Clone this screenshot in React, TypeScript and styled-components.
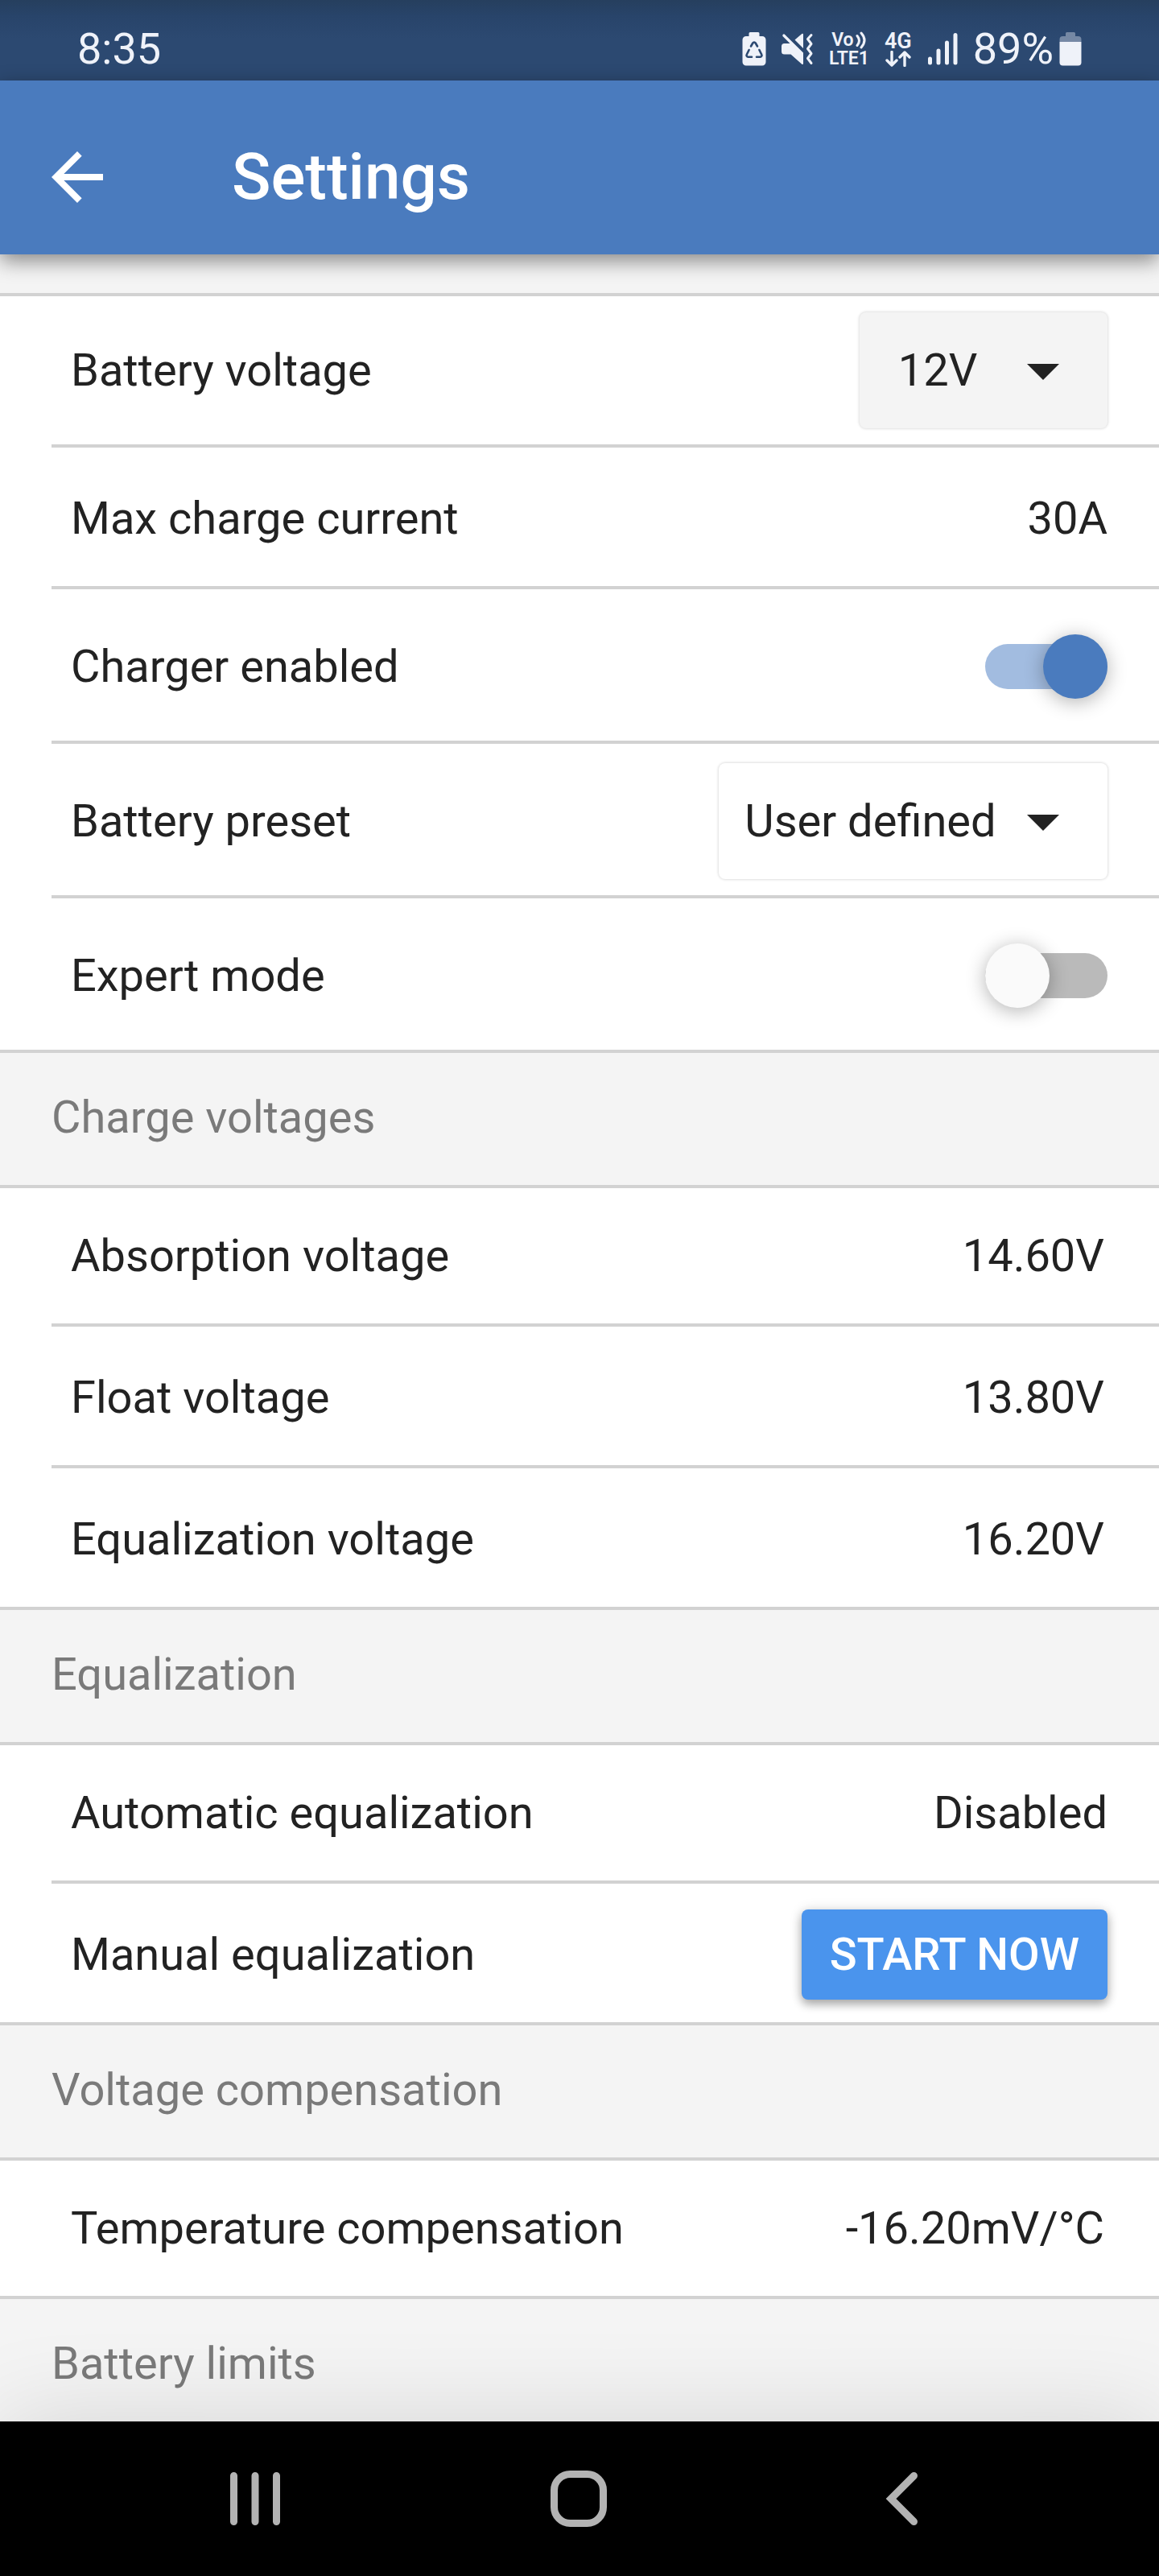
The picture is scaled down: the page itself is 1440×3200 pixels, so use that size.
import React, { useState } from "react";
import styled, { createGlobalStyle, css } from "styled-components";

const color = {
  brand: "#4a7bbe",
  brandLight: "#a2bce0",
  statusTop: "#263f5e",
  status: "#2c4971",
  statusInk: "#eff2f9",
  action: "#4a94ed",
  ink: "#222222",
  muted: "#7a7a7a",
  line: "#d2d2d2",
  surface: "#ffffff",
  canvas: "#f4f4f4",
  navInk: "#b3b3b3",
};

const GlobalStyle = createGlobalStyle`
  *, *::before, *::after { box-sizing: border-box; }
  body { margin: 0; background: ${color.canvas}; }
  button, select, input { font: inherit; margin: 0; }
`;

const Page = styled.div`
  display: flex;
  flex-direction: column;
  height: 100vh;
  overflow: hidden;
  background: ${color.canvas};
  color: ${color.ink};
  font-family: Roboto, "Noto Sans", sans-serif;
  font-size: 56px;
  line-height: 64px;
`;

const StatusBar = styled.div`
  flex: none;
  display: flex;
  align-items: center;
  justify-content: space-between;
  height: 100px;
  padding: 22px 96px 0;
  background: linear-gradient(${color.statusTop}, #28446a 20px, ${color.status} 48px);
  color: ${color.statusInk};
  font-size: 54px;
`;

const StatusIcons = styled.div`
  display: flex;
  align-items: center;
  gap: 19px;

  svg {
    display: block;
    height: 44px;
  }
`;

const BatteryLevel = styled.div`
  display: flex;
  align-items: center;
  gap: 7px;
`;

const NetworkBadge = styled.span`
  display: flex;
  flex-direction: column;
  align-items: center;
  font-size: 23px;
  font-weight: 600;
  line-height: 23px;
`;

const VoiceLine = styled.span`
  display: flex;
  align-items: center;
  gap: 2px;

  svg {
    height: 22px;
  }
`;

const DataBadge = styled(NetworkBadge)`
  font-size: 27px;

  svg {
    height: 20px;
  }
`;

const AppBar = styled.header`
  position: relative;
  z-index: 1;
  flex: none;
  display: flex;
  align-items: center;
  gap: 144px;
  height: 216px;
  padding: 24px 48px 0;
  background: ${color.brand};
  box-shadow: 0 8px 24px rgba(0, 0, 0, 0.45);
  color: #ffffff;
`;

const IconButton = styled.button`
  display: grid;
  place-items: center;
  padding: 0;
  border: 0;
  background: none;
  color: inherit;
  cursor: pointer;
`;

const Title = styled.h1`
  margin: 0;
  font-size: 80px;
  font-weight: 500;
  line-height: 96px;
`;

const Content = styled.main`
  flex: 1;
  min-height: 0;
  padding-top: 48px;
  overflow-y: auto;
  scrollbar-width: none;
`;

const GroupTitle = styled.h2`
  display: flex;
  align-items: center;
  min-height: 164px;
  margin: 0;
  padding: 0 64px 4px;
  color: ${color.muted};
  font-size: 56px;
  font-weight: 400;
`;

const Group = styled.div`
  border-block: 4px solid ${color.line};
  background: ${color.surface};
`;

const Row = styled.div<{ $tall?: boolean }>`
  box-sizing: content-box;
  display: flex;
  align-items: center;
  justify-content: space-between;
  min-height: ${(p) => (p.$tall ? 184 : 168)}px;
  margin-left: 64px;
  padding: 0 64px 0 24px;

  & + & {
    padding-top: 4px;
    border-top: 4px solid ${color.line};
  }
`;

const Value = styled.span<{ $measured?: boolean }>`
  padding-right: ${(p) => (p.$measured ? 4 : 0)}px;
  text-align: right;
`;

const SelectBox = styled.div<{ $filled?: boolean }>`
  position: relative;
  border-radius: 8px;
  background: ${(p) => (p.$filled ? color.canvas : color.surface)};
  box-shadow: 0 0 3px 1px rgba(0, 0, 0, 0.13);

  svg {
    position: absolute;
    top: 50%;
    right: 60px;
    margin-top: -8px;
    pointer-events: none;
  }
`;

const Select = styled.select<{ $filled?: boolean }>`
  display: block;
  min-width: 308px;
  height: 144px;
  padding: 0 ${(p) => (p.$filled ? 146 : 138)}px 0 32px;
  border: 0;
  appearance: none;
  background: none;
  color: inherit;
  text-align: center;
  text-align-last: center;
`;

const Switch = styled.input`
  position: relative;
  flex: none;
  width: 152px;
  height: 56px;
  border-radius: 28px;
  appearance: none;
  background: #bababa;
  cursor: pointer;

  &::before {
    content: "";
    position: absolute;
    top: -12px;
    left: 0;
    width: 80px;
    height: 80px;
    border-radius: 50%;
    background: #fafafa;
    box-shadow: 0 4px 24px rgba(0, 0, 0, 0.3);
  }

  ${(p) =>
    p.checked &&
    css`
      background: ${color.brandLight};

      &::before {
        right: 0;
        left: auto;
        background: ${color.brand};
      }
    `}
`;

const ActionButton = styled.button`
  height: 112px;
  padding: 0 35px;
  border: 0;
  border-radius: 8px;
  background: ${color.action};
  box-shadow: 0 6px 12px rgba(0, 0, 0, 0.3), 0 0 16px rgba(0, 0, 0, 0.12);
  color: #ffffff;
  font-weight: 500;
  text-transform: uppercase;
  cursor: pointer;
`;

const NavBar = styled.nav`
  position: relative;
  z-index: 1;
  flex: none;
  display: grid;
  grid-template-columns: repeat(3, 1fr);
  height: 192px;
  padding: 0 118px 0 116px;
  background: #000000;
  box-shadow: 0 0 120px rgba(0, 0, 0, 0.13);
  color: ${color.navInk};
`;

const Caret = () => (
  <svg width="40" height="20" viewBox="0 0 40 20" aria-hidden="true">
    <path d="M0 0H40L20 20Z" fill="currentColor" />
  </svg>
);

const BatterySaverIcon = () => (
  <svg width="30" height="44" viewBox="0 0 30 44" aria-hidden="true">
    <path
      fill="currentColor"
      d="M10 1h10a1.500 1.500 0 0 1 1.500 1.500V6H25a4.500 4.500 0 0 1 4.500 4.500V38a4.500 4.500 0 0 1-4.500 4.500H5A4.500 4.500 0 0 1 .5 38V10.500A4.500 4.500 0 0 1 5 6h3.500V2.500A1.500 1.500 0 0 1 10 1Z"
    />
    <g fill="none" stroke={color.status} strokeWidth="2.600" strokeLinecap="round" strokeLinejoin="round">
      <path d="M11 18.500l2.300-4a2 2 0 0 1 3.400 0l2.300 4" />
      <path d="M8.600 23l-2.700 5.500a2 2 0 0 0 1.800 3.200H12" />
      <path d="M21.400 23l2.700 5.500a2 2 0 0 1-1.800 3.200H18" />
    </g>
  </svg>
);

const MuteIcon = () => (
  <svg width="40" height="44" viewBox="0 0 40 44" aria-hidden="true">
    <g fill="currentColor">
      <path d="M1.700 6.200A1.600 1.600 0 0 1 4.200 4L27 26.500V40a1 1 0 0 1-1.700.8L11.500 28.500H3.500A3.500 3.500 0 0 1 0 25v-6.500A3.500 3.500 0 0 1 3.500 15h7Z" />
      <path d="M16.500 10.500L25.300 3a1 1 0 0 1 1.700.8V21Z" />
    </g>
    <path
      d="M37 4.500l-4.500 5 4.500 6-4.500 6 4.500 6-4.500 6 4.500 6"
      fill="none"
      stroke="currentColor"
      strokeWidth="3"
      strokeLinecap="round"
      strokeLinejoin="round"
    />
  </svg>
);

const VoiceWavesIcon = () => (
  <svg width="14" height="22" viewBox="0 0 14 22" aria-hidden="true">
    <path
      d="M2 5.500q5 6 0 12M7 2q8 9 0 18"
      fill="none"
      stroke="currentColor"
      strokeWidth="3"
      strokeLinecap="round"
    />
  </svg>
);

const DataArrowsIcon = () => (
  <svg width="32" height="20" viewBox="0 0 32 20" aria-hidden="true">
    <path
      d="M8 1.500v16M2 12l6 6 6-6M24 18.500v-16M18 8l6-6 6 6"
      fill="none"
      stroke="currentColor"
      strokeWidth="3.400"
      strokeLinecap="round"
      strokeLinejoin="round"
    />
  </svg>
);

const SignalIcon = () => (
  <svg width="38" height="44" viewBox="0 0 38 44" aria-hidden="true">
    <path
      d="M3.500 34v5M14 24v15M24.500 14v25M35 4.500v34.500"
      fill="none"
      stroke="currentColor"
      strokeWidth="5"
      strokeLinecap="round"
    />
  </svg>
);

const BatteryIcon = () => (
  <svg width="28" height="44" viewBox="0 0 28 44" aria-hidden="true">
    <path
      fill="currentColor"
      opacity="0.38"
      d="M9.500 1h9A1.500 1.500 0 0 1 20 2.500V6h3.500A4 4 0 0 1 27.500 10v3H.5v-3A4 4 0 0 1 4.500 6H8V2.500A1.500 1.500 0 0 1 9.500 1Z"
    />
    <path fill="currentColor" d="M.5 13h27v25.500a4 4 0 0 1-4 4h-19a4 4 0 0 1-4-4Z" />
  </svg>
);

const BackArrowIcon = () => (
  <svg width="96" height="96" viewBox="0 0 24 24" aria-hidden="true">
    <path fill="currentColor" d="M20 11H7.830l5.590-5.590L12 4l-8 8 8 8 1.410-1.410L7.830 13H20v-2z" />
  </svg>
);

const RecentsIcon = () => (
  <svg width="72" height="72" viewBox="0 0 72 72" aria-hidden="true">
    <path
      d="M9.500 7.500v57M36 7.500v57M62.500 7.500v57"
      fill="none"
      stroke="currentColor"
      strokeWidth="9"
      strokeLinecap="round"
    />
  </svg>
);

const HomeIcon = () => (
  <svg width="72" height="72" viewBox="0 0 72 72" aria-hidden="true">
    <rect x="5.500" y="5.500" width="61" height="61" rx="20" fill="none" stroke="currentColor" strokeWidth="9" />
  </svg>
);

const BackIcon = () => (
  <svg width="72" height="72" viewBox="0 0 72 72" aria-hidden="true">
    <path
      d="M50.500 7.500L22 36l28.500 28.500"
      fill="none"
      stroke="currentColor"
      strokeWidth="9"
      strokeLinecap="round"
    />
  </svg>
);

type Reading = { name: string; value: string; measured?: boolean };

const chargeVoltages: Reading[] = [
  { name: "Absorption voltage", value: "14.60V" },
  { name: "Float voltage", value: "13.80V" },
  { name: "Equalization voltage", value: "16.20V" },
];

const ReadingRow = ({ name, value, measured }: Reading) => (
  <Row>
    <span>{name}</span>
    <Value $measured={measured}>{value}</Value>
  </Row>
);

type PickerProps = {
  id: string;
  label: string;
  value: string;
  options: string[];
  filled?: boolean;
  onChange: (value: string) => void;
};

const PickerRow = ({ id, label, value, options, filled, onChange }: PickerProps) => (
  <Row $tall>
    <label htmlFor={id}>{label}</label>
    <SelectBox $filled={filled}>
      <Select id={id} $filled={filled} value={value} onChange={(e) => onChange(e.target.value)}>
        {options.map((o) => (
          <option key={o}>{o}</option>
        ))}
      </Select>
      <Caret />
    </SelectBox>
  </Row>
);

type SwitchProps = { id: string; label: string; checked: boolean; onChange: (on: boolean) => void };

const SwitchRow = ({ id, label, checked, onChange }: SwitchProps) => (
  <Row $tall>
    <label htmlFor={id}>{label}</label>
    <Switch id={id} type="checkbox" checked={checked} onChange={(e) => onChange(e.target.checked)} />
  </Row>
);

export default function App() {
  const [voltage, setVoltage] = useState("12V");
  const [preset, setPreset] = useState("User defined");
  const [charger, setCharger] = useState(true);
  const [expert, setExpert] = useState(false);

  return (
    <Page>
      <GlobalStyle />
      <StatusBar>
        <span>8:35</span>
        <StatusIcons>
          <BatterySaverIcon />
          <MuteIcon />
          <NetworkBadge>
            <VoiceLine>
              Vo
              <VoiceWavesIcon />
            </VoiceLine>
            <span>LTE1</span>
          </NetworkBadge>
          <DataBadge>
            <span>4G</span>
            <DataArrowsIcon />
          </DataBadge>
          <SignalIcon />
          <BatteryLevel>
            <span>89%</span>
            <BatteryIcon />
          </BatteryLevel>
        </StatusIcons>
      </StatusBar>

      <AppBar>
        <IconButton type="button" aria-label="Back">
          <BackArrowIcon />
        </IconButton>
        <Title>Settings</Title>
      </AppBar>

      <Content>
        <Group>
          <PickerRow
            id="voltage"
            label="Battery voltage"
            value={voltage}
            options={["12V", "24V"]}
            filled
            onChange={setVoltage}
          />
          <ReadingRow name="Max charge current" value="30A" />
          <SwitchRow id="charger" label="Charger enabled" checked={charger} onChange={setCharger} />
          <PickerRow
            id="preset"
            label="Battery preset"
            value={preset}
            options={["User defined", "Normal", "High"]}
            onChange={setPreset}
          />
          <SwitchRow id="expert" label="Expert mode" checked={expert} onChange={setExpert} />
        </Group>

        <GroupTitle>Charge voltages</GroupTitle>
        <Group>
          {chargeVoltages.map((r) => (
            <ReadingRow key={r.name} {...r} measured />
          ))}
        </Group>

        <GroupTitle>Equalization</GroupTitle>
        <Group>
          <ReadingRow name="Automatic equalization" value="Disabled" />
          <Row>
            <span>Manual equalization</span>
            <ActionButton type="button">Start now</ActionButton>
          </Row>
        </Group>

        <GroupTitle>Voltage compensation</GroupTitle>
        <Group>
          <ReadingRow name="Temperature compensation" value="-16.20mV/°C" measured />
        </Group>

        <GroupTitle>Battery limits</GroupTitle>
      </Content>

      <NavBar>
        <IconButton type="button" aria-label="Recent apps">
          <RecentsIcon />
        </IconButton>
        <IconButton type="button" aria-label="Home">
          <HomeIcon />
        </IconButton>
        <IconButton type="button" aria-label="Go back">
          <BackIcon />
        </IconButton>
      </NavBar>
    </Page>
  );
}
